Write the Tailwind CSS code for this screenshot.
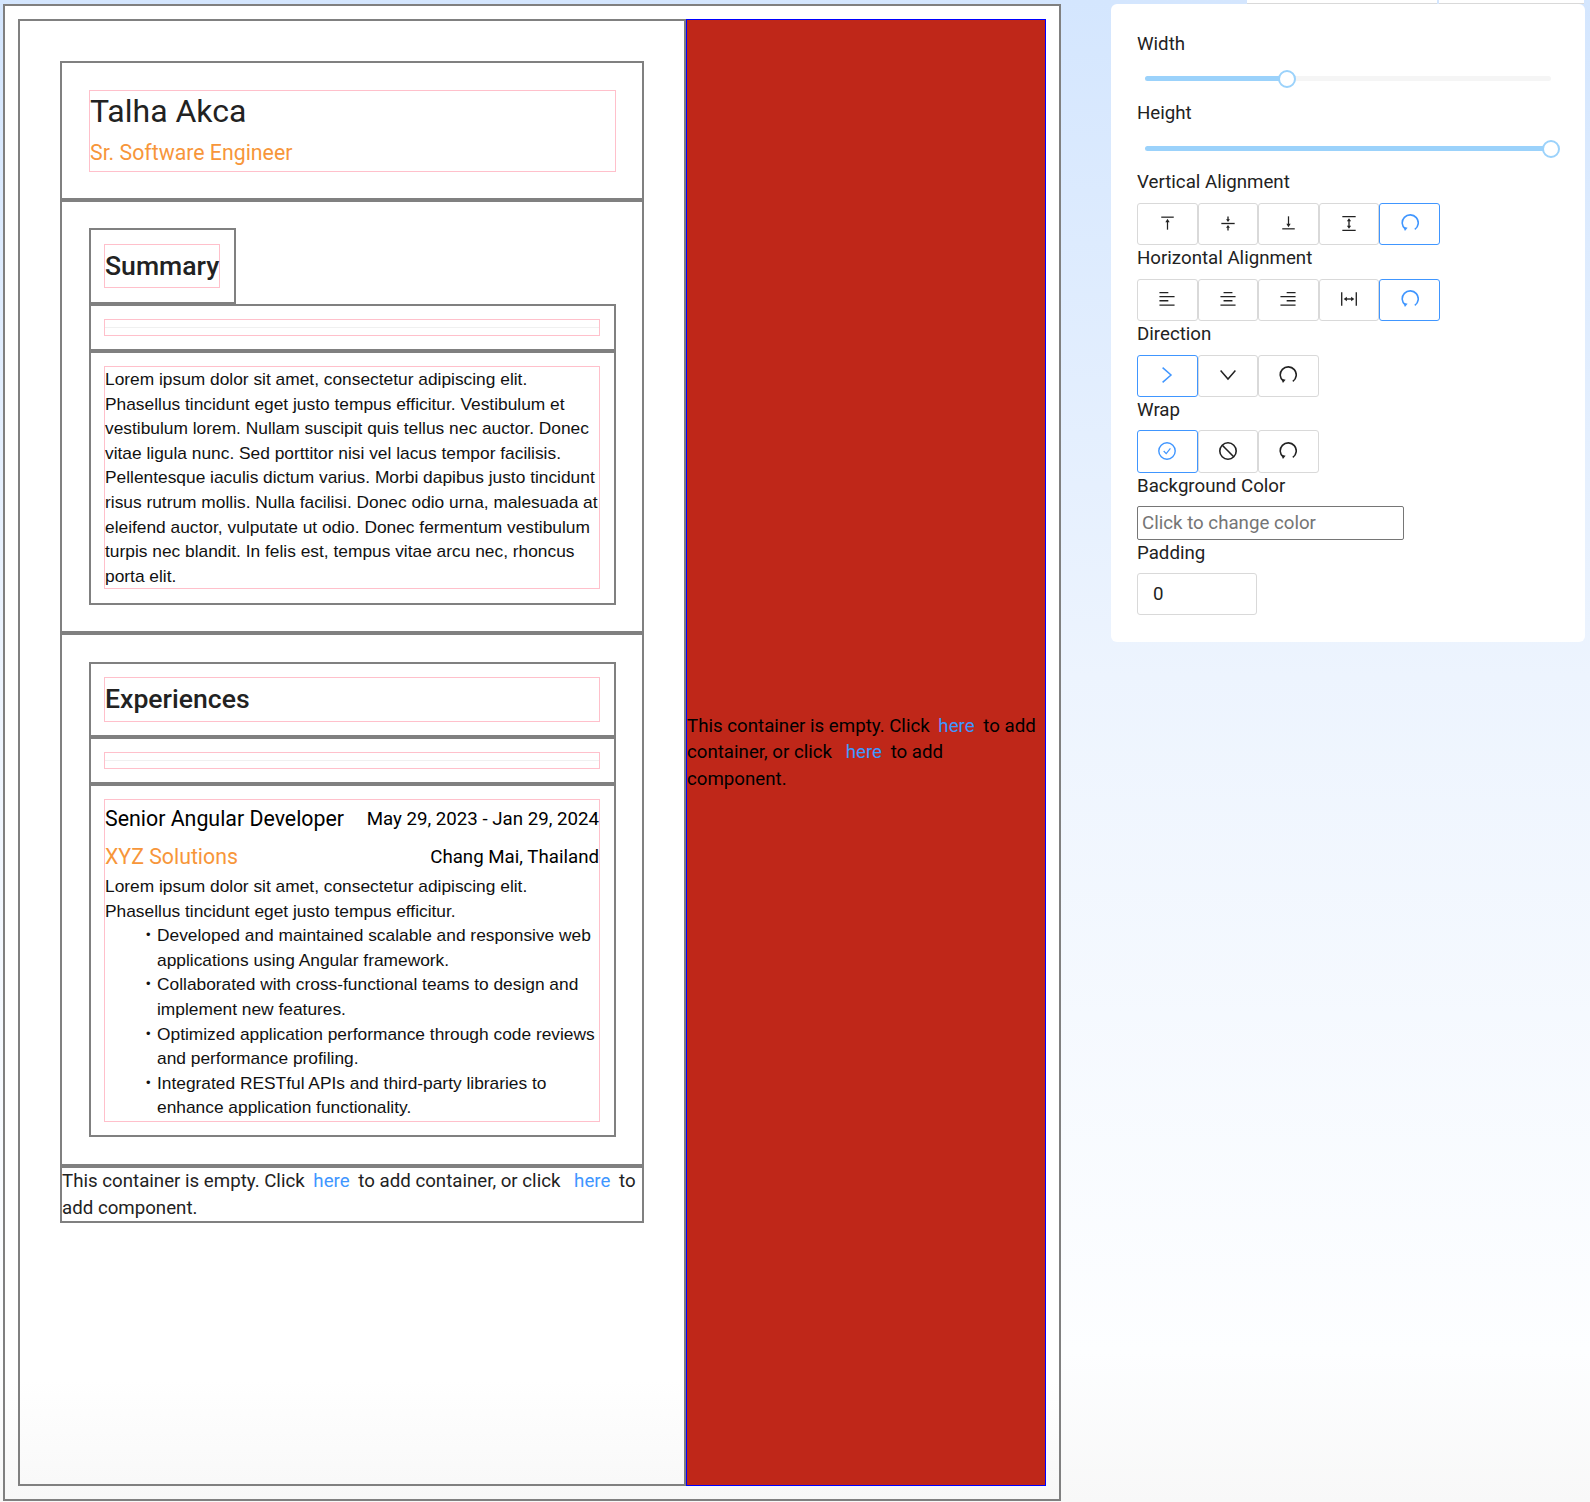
<!DOCTYPE html>
<html lang="en">
<head>
    <meta charset="UTF-8">
    <meta name="viewport" content="width=device-width, initial-scale=1.0">
    <title>Resume Builder</title>
    <script src="https://cdn.jsdelivr.net/npm/@tailwindcss/browser@4"></script>
</head>
<body class="relative w-[1590px] h-[1502px] overflow-hidden bg-[linear-gradient(to_bottom,#d4e6fe_0%,#edf4fe_45%,#fdfeff_90%,#f8f8f8_100%)] font-[Roboto,sans-serif] text-[#222222]">
    <svg class="hidden">
        <symbol id="i-redo" viewBox="0 0 18 18"><path d="M4.4 15.2A8 8 0 1 1 13.8 15.4" fill="none" stroke="currentColor" stroke-width="1.6"/><path d="M2.6 12.8 6.6 13.8 3.9 17Z" fill="currentColor"/></symbol>
        <symbol id="i-top" viewBox="0 0 18 18"><path d="M1.5 2H16.5" stroke="currentColor" stroke-width="1.5"/><path d="M9 7V17" stroke="currentColor" stroke-width="1.5"/><path d="M9 4 11.6 8H6.4Z" fill="currentColor"/></symbol>
        <symbol id="i-middle" viewBox="0 0 18 18"><path d="M1.5 9H16.5" stroke="currentColor" stroke-width="1.5"/><path d="M9 1V5M9 13V17" stroke="currentColor" stroke-width="1.5"/><path d="M9 7.4 6.8 4.2H11.2ZM9 10.6 11.2 13.8H6.8Z" fill="currentColor"/></symbol>
        <symbol id="i-bottom" viewBox="0 0 18 18"><path d="M1.5 16H16.5" stroke="currentColor" stroke-width="1.5"/><path d="M9 1V11" stroke="currentColor" stroke-width="1.5"/><path d="M9 14 6.4 10H11.6Z" fill="currentColor"/></symbol>
        <symbol id="i-height" viewBox="0 0 18 18"><path d="M1.5 1.2H16.5M1.5 16.8H16.5" stroke="currentColor" stroke-width="1.5"/><path d="M9 5V13" stroke="currentColor" stroke-width="1.5"/><path d="M9 3 11.4 6.6H6.6ZM9 15 6.6 11.4H11.4Z" fill="currentColor"/></symbol>
        <symbol id="i-left" viewBox="0 0 18 18"><path d="M0.5 1.8H10.5M0.5 6.4H17.5M0.5 11H10.5M0.5 15.8H17.5" stroke="currentColor" stroke-width="1.5"/></symbol>
        <symbol id="i-center" viewBox="0 0 18 18"><path d="M4 1.8H14M0.5 6.4H17.5M4 11H14M0.5 15.8H17.5" stroke="currentColor" stroke-width="1.5"/></symbol>
        <symbol id="i-right" viewBox="0 0 18 18"><path d="M7.5 1.8H17.5M0.5 6.4H17.5M7.5 11H17.5M0.5 15.8H17.5" stroke="currentColor" stroke-width="1.5"/></symbol>
        <symbol id="i-width" viewBox="0 0 18 18"><path d="M0.8 1.5V16.5M17.2 1.5V16.5" stroke="currentColor" stroke-width="1.5"/><path d="M5 9H13" stroke="currentColor" stroke-width="1.5"/><path d="M3 9 6.6 6.6V11.4ZM15 9 11.4 11.4V6.6Z" fill="currentColor"/></symbol>
        <symbol id="i-chevron-right" viewBox="0 0 18 18"><path d="M4.6 1.6 13 9 4.6 16.4" fill="none" stroke="currentColor" stroke-width="1.5"/></symbol>
        <symbol id="i-chevron-down" viewBox="0 0 18 18"><path d="M1.6 4.6 9 13 16.4 4.6" fill="none" stroke="currentColor" stroke-width="1.5"/></symbol>
        <symbol id="i-check" viewBox="0 0 18 18"><circle cx="9" cy="9" r="8.2" fill="none" stroke="currentColor" stroke-width="1.4"/><path d="M5.7 9 8.2 11.6 12.4 6.4" fill="none" stroke="currentColor" stroke-width="1.2"/></symbol>
        <symbol id="i-stop" viewBox="0 0 18 18"><circle cx="9" cy="9" r="8.2" fill="none" stroke="currentColor" stroke-width="1.6"/><path d="M3.3 3.3 14.7 14.7" stroke="currentColor" stroke-width="1.6"/></symbol>
    </svg>

    <div class="flex items-start pl-[3px] pt-[4px]">
        <!-- canvas -->
        <div class="w-[1058px] h-[1497px] border-2 border-[#808080] bg-[linear-gradient(to_bottom,#ffffff_92%,#f8f8f8_100%)] pl-[13px] pt-[13px]">
            <div class="flex w-[1028px] h-[1467px]">
                <div class="w-[668px] h-full border-2 border-[#808080] pl-[40px] pt-[40px]">
                    <div class="w-[584px]">
                        <section class="h-[139px] border-2 border-[#808080] pl-[27px] pr-[26px] pt-[27px]">
                            <div class="h-[82px] border border-[#ffc0cb]">
                                <div class="text-[32px] leading-[40px] text-[#222222]">Talha Akca</div>
                                <div class="text-[21.3px] leading-[30px] mt-[7px] text-[#f7963a]">Sr. Software Engineer</div>
                            </div>
                        </section>

                        <section class="h-[433px] border-2 border-[#808080] pl-[27px] pr-[26px] pt-[26px]">
                            <div class="w-[147px] h-[76px] border-2 border-[#808080] pl-[13px] pt-[14px]">
                                <div class="w-[116px] h-[44px] border border-[#ffc0cb] text-[26.6px] font-medium leading-[42px] whitespace-nowrap">Summary</div>
                            </div>
                            <div class="h-[47px] border-2 border-[#808080] pl-[13px] pr-[14px] pt-[13px]">
                                <div class="h-[17px] border border-[#ffc0cb] flex items-center"><div class="w-full h-px bg-[#f0f0f0]"></div></div>
                            </div>
                            <div class="h-[254px] border-2 border-[#808080] pl-[13px] pr-[14px] pt-[13px]">
                                <div class="h-[223px] border border-[#ffc0cb] font-['Liberation_Sans',Arial,sans-serif] text-[17.35px] leading-[24.6px] text-[#111111]">
                                    Lorem ipsum dolor sit amet, consectetur adipiscing elit. Phasellus tincidunt eget justo tempus efficitur. Vestibulum et vestibulum lorem. Nullam suscipit quis tellus nec auctor. Donec vitae ligula nunc. Sed porttitor nisi vel lacus tempor facilisis. Pellentesque iaculis dictum varius. Morbi dapibus justo tincidunt risus rutrum mollis. Nulla facilisi. Donec odio urna, malesuada at eleifend auctor, vulputate ut odio. Donec fermentum vestibulum turpis nec blandit. In felis est, tempus vitae arcu nec, rhoncus porta elit.
                                </div>
                            </div>
                        </section>

                        <section class="h-[533px] border-2 border-[#808080] pl-[27px] pr-[26px] pt-[27px]">
                            <div class="h-[75px] border-2 border-[#808080] pl-[13px] pr-[14px] pt-[13px]">
                                <div class="h-[45px] border border-[#ffc0cb] text-[26.6px] font-medium leading-[42px]">Experiences</div>
                            </div>
                            <div class="h-[47px] border-2 border-[#808080] pl-[13px] pr-[14px] pt-[13px]">
                                <div class="h-[17px] border border-[#ffc0cb] flex items-center"><div class="w-full h-px bg-[#f0f0f0]"></div></div>
                            </div>
                            <div class="h-[353px] border-2 border-[#808080] pl-[13px] pr-[14px] pt-[13px]">
                                <div class="h-[323px] border border-[#ffc0cb]">
                                    <div class="flex justify-between items-center mt-[5px] h-[28px] text-black">
                                        <span class="text-[21.35px]">Senior Angular Developer</span>
                                        <span class="text-[18.7px]">May 29, 2023 - Jan 29, 2024</span>
                                    </div>
                                    <div class="flex justify-between items-center mt-[10px] h-[28px]">
                                        <span class="text-[21.3px] text-[#f7963a]">XYZ Solutions</span>
                                        <span class="text-[18.7px] text-black">Chang Mai, Thailand</span>
                                    </div>
                                    <div class="font-['Liberation_Sans',Arial,sans-serif] text-[17.35px] leading-[24.6px] text-[#111111] mt-[3px]">
                                        <p>Lorem ipsum dolor sit amet, consectetur adipiscing elit. Phasellus tincidunt eget justo tempus efficitur.</p>
                                        <ul class="pl-[52px]">
                                            <li class="relative before:absolute before:left-[-11px] before:text-[13px] before:content-['•']">Developed and maintained scalable and responsive web applications using Angular framework.</li>
                                            <li class="relative before:absolute before:left-[-11px] before:text-[13px] before:content-['•']">Collaborated with cross-functional teams to design and implement new features.</li>
                                            <li class="relative before:absolute before:left-[-11px] before:text-[13px] before:content-['•']">Optimized application performance through code reviews and performance profiling.</li>
                                            <li class="relative before:absolute before:left-[-11px] before:text-[13px] before:content-['•']">Integrated RESTful APIs and third-party libraries to enhance application functionality.</li>
                                        </ul>
                                    </div>
                                </div>
                            </div>
                        </section>

                        <section class="h-[57px] border-2 border-[#808080] text-[18.7px] leading-[26.5px]">
                            This container is empty. Click <a class="text-[#4096ff] mx-[4px]">here</a> to add container, or click <a class="text-[#4096ff] ml-[9px] mr-[4px]">here</a> to add component.
                        </section>
                    </div>
                </div>
                <div class="w-[360px] h-full border border-[#0000ff] bg-[#bf2719] flex items-center text-[18.7px] leading-[26.5px] text-black">
                    <div>This container is empty. Click <a class="text-[#4096ff] mx-[4px]">here</a> to add container, or click <a class="text-[#4096ff] ml-[9px] mr-[4px]">here</a> to add component.</div>
                </div>
            </div>
        </div>

        <!-- settings -->
        <div class="ml-[50px] -mt-[4px] w-[474px]">
            <div class="flex justify-end gap-[2px] h-[4px] pr-[1px]">
                <div class="w-[190px] bg-white border-b border-[#d9d9d9]"></div>
                <div class="w-[145px] bg-white border-b border-[#d9d9d9]"></div>
            </div>
            <div class="h-[638px] bg-white rounded-[6px] px-[26px] pt-[28px] text-[18.7px] text-[#222222]">
                <div class="h-[24px] leading-[24px]">Width</div>
                <div class="relative h-[45px] flex items-center pl-[8px]">
                    <div class="w-[406px] h-[5px] rounded-full bg-[#f5f5f5]"><div class="w-[142px] h-full rounded-full bg-[#9bd2fb]"></div></div>
                    <div class="absolute left-[141px] top-[14px] w-[18px] h-[18px] rounded-full bg-white border-[2.5px] border-[#9bd2fb]"></div>
                </div>
                <div class="h-[24px] leading-[24px]">Height</div>
                <div class="relative h-[45px] flex items-center pl-[8px] pt-[2px]">
                    <div class="w-[406px] h-[5px] rounded-full bg-[#9bd2fb]"></div>
                    <div class="absolute left-[405px] top-[15px] w-[18px] h-[18px] rounded-full bg-white border-[2.5px] border-[#9bd2fb]"></div>
                </div>

                <div class="h-[24px] leading-[24px]">Vertical Alignment</div>
                <div class="flex mt-[9px] h-[42px]">
                    <button class="w-[60.6px] pb-[2px] flex items-center justify-center border border-[#d9d9d9] rounded-[3px] text-[#222222]"><svg class="w-[15px] h-[16px]"><use href="#i-top"/></svg></button>
                    <button class="w-[60.6px] pb-[2px] flex items-center justify-center border border-[#d9d9d9] rounded-[3px] text-[#222222]"><svg class="w-[16px] h-[17px]"><use href="#i-middle"/></svg></button>
                    <button class="w-[60.6px] pb-[2px] flex items-center justify-center border border-[#d9d9d9] rounded-[3px] text-[#222222]"><svg class="w-[15px] h-[16px]"><use href="#i-bottom"/></svg></button>
                    <button class="w-[60.6px] pb-[2px] flex items-center justify-center border border-[#d9d9d9] rounded-[3px] text-[#222222]"><svg class="w-[16px] h-[17px]"><use href="#i-height"/></svg></button>
                    <button class="w-[60.6px] pb-[2px] flex items-center justify-center border border-[#4096ff] rounded-[3px] text-[#4096ff]"><svg class="w-[18px] h-[18px]"><use href="#i-redo"/></svg></button>
                </div>

                <div class="h-[24px] leading-[26px]">Horizontal Alignment</div>
                <div class="flex mt-[10px] h-[42px]">
                    <button class="w-[60.6px] pb-[2px] flex items-center justify-center border border-[#d9d9d9] rounded-[3px] text-[#222222]"><svg class="w-[18px] h-[16px]"><use href="#i-left"/></svg></button>
                    <button class="w-[60.6px] pb-[2px] flex items-center justify-center border border-[#d9d9d9] rounded-[3px] text-[#222222]"><svg class="w-[18px] h-[16px]"><use href="#i-center"/></svg></button>
                    <button class="w-[60.6px] pb-[2px] flex items-center justify-center border border-[#d9d9d9] rounded-[3px] text-[#222222]"><svg class="w-[18px] h-[16px]"><use href="#i-right"/></svg></button>
                    <button class="w-[60.6px] pb-[2px] flex items-center justify-center border border-[#d9d9d9] rounded-[3px] text-[#222222]"><svg class="w-[18px] h-[16px]"><use href="#i-width"/></svg></button>
                    <button class="w-[60.6px] pb-[2px] flex items-center justify-center border border-[#4096ff] rounded-[3px] text-[#4096ff]"><svg class="w-[18px] h-[18px]"><use href="#i-redo"/></svg></button>
                </div>

                <div class="h-[24px] leading-[26px]">Direction</div>
                <div class="flex mt-[10px] h-[42px]">
                    <button class="w-[60.6px] pb-[2px] flex items-center justify-center border border-[#4096ff] rounded-[3px] text-[#4096ff]"><svg class="w-[18px] h-[18px]"><use href="#i-chevron-right"/></svg></button>
                    <button class="w-[60.6px] pb-[2px] flex items-center justify-center border border-[#d9d9d9] rounded-[3px] text-[#222222]"><svg class="w-[18px] h-[18px]"><use href="#i-chevron-down"/></svg></button>
                    <button class="w-[60.6px] pb-[2px] flex items-center justify-center border border-[#d9d9d9] rounded-[3px] text-[#222222]"><svg class="w-[18px] h-[18px]"><use href="#i-redo"/></svg></button>
                </div>

                <div class="h-[24px] leading-[26px]">Wrap</div>
                <div class="flex mt-[9px] h-[43px]">
                    <button class="w-[60.6px] pb-[2px] flex items-center justify-center border border-[#4096ff] rounded-[3px] text-[#4096ff]"><svg class="w-[18px] h-[18px]"><use href="#i-check"/></svg></button>
                    <button class="w-[60.6px] pb-[2px] flex items-center justify-center border border-[#d9d9d9] rounded-[3px] text-[#222222]"><svg class="w-[18px] h-[18px]"><use href="#i-stop"/></svg></button>
                    <button class="w-[60.6px] pb-[2px] flex items-center justify-center border border-[#d9d9d9] rounded-[3px] text-[#222222]"><svg class="w-[18px] h-[18px]"><use href="#i-redo"/></svg></button>
                </div>

                <div class="h-[24px] leading-[26px]">Background Color</div>
                <input type="text" placeholder="Click to change color" class="block mt-[9px] w-[267px] h-[34px] border border-[#767676] rounded-[2px] px-[4px] text-[18.7px] placeholder:text-[#757575] outline-none">

                <div class="h-[24px] leading-[26px]">Padding</div>
                <div class="mt-[9px] w-[120px] h-[42px] border border-[#d9d9d9] rounded-[3px] pl-[15px] leading-[40px]">0</div>
            </div>
        </div>
    </div>
</body>
</html>
